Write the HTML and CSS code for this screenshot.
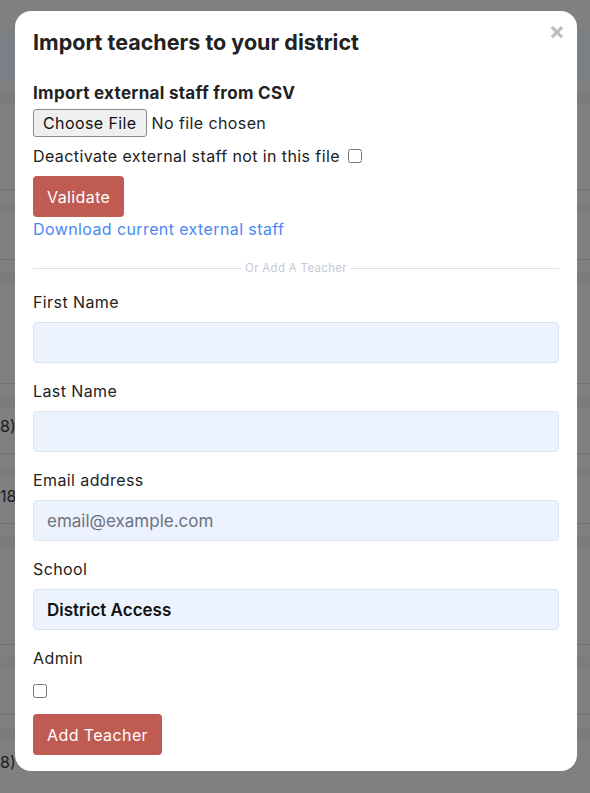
FILE: index.html
```html
<!DOCTYPE html>
<html>
<head>
<meta charset="utf-8">
<link rel="stylesheet" href="styles.css">
</head>
<body>
<div class="page">
  <div class="band"></div>
  <div class="row r1"></div>
  <div class="row r2"></div>
  <div class="row r3"></div>
  <div class="row r4"><span class="cell">8)</span></div>
  <div class="row r5"><span class="cell">18</span></div>
  <div class="row r6"></div>
  <div class="row r7"></div>
  <div class="row r8"><span class="cell">8)</span></div>
</div>
<div class="overlay">
  <div class="modal">
    <span class="close">&times;</span>
    <h2 class="title">Import teachers to your district</h2>
    <div class="csv">
      <div class="csv-head">Import external staff from CSV</div>
      <input class="file" type="file">
      <label class="deact">Deactivate external staff not in this file <input class="check" type="checkbox"></label>
      <button class="btn">Validate</button>
      <a class="link" href="#">Download current external staff</a>
    </div>
    <div class="divider"><span>Or Add A Teacher</span></div>
    <div class="field">
      <label class="lbl">First Name</label>
      <input class="inp" type="text">
    </div>
    <div class="field">
      <label class="lbl">Last Name</label>
      <input class="inp" type="text">
    </div>
    <div class="field">
      <label class="lbl">Email address</label>
      <input class="inp" type="email" placeholder="email@example.com">
    </div>
    <div class="field">
      <label class="lbl">School</label>
      <div class="inp select">District Access</div>
    </div>
    <div class="field admin">
      <label class="lbl">Admin</label>
      <input class="check" type="checkbox">
    </div>
    <button class="btn">Add Teacher</button>
  </div>
</div>
</body>
</html>
```

FILE: styles.css
```css
html, body {
  margin: 0;
  padding: 0;
  width: 590px;
  height: 793px;
  overflow: hidden;
  background: #808080;
  font-family: Inter, "Liberation Sans", sans-serif;
}
.page {
  display: flex;
  flex-direction: column;
  padding-top: 33px;
}
.band {
  height: 47px;
  background: #7b7f86;
}
.row {
  border-bottom: 1px solid #727272;
  box-sizing: border-box;
  display: flex;
  align-items: center;
  background: linear-gradient(#808080 0, #808080 12px, #7c7c7c 12px, #7c7c7c 24px, #808080 24px);
}
.r1 { height: 110px; }
.r2 { height: 70px; }
.r3 { height: 124px; }
.r4 { height: 70px; }
.r5 { height: 70px; }
.r6 { height: 121px; }
.r7 { height: 70px; }
.r8 { height: 80px; border-bottom: none; }
.cell {
  font-size: 16px;
  color: #1c1c1c;
  padding-left: 0;
  padding-top: 14px;
}
.overlay {
  position: absolute;
  left: 0;
  top: 0;
  width: 590px;
  height: 793px;
}
.modal {
  position: absolute;
  left: 15px;
  top: 11px;
  width: 562px;
  height: 760px;
  box-sizing: border-box;
  background: #fff;
  border-radius: 16px;
  padding: 18px 18px 0 18px;
  color: #212121;
}
.close {
  position: absolute;
  right: 12px;
  top: 8px;
  font-size: 24px;
  font-weight: 700;
  color: #bdbdbd;
  line-height: 1;
}
.title {
  margin: 0;
  font-size: 21.5px;
  font-weight: 700;
  line-height: 26px;
  color: #222;
}
.csv {
  display: flex;
  flex-direction: column;
  align-items: flex-start;
  margin-top: 27px;
  letter-spacing: 0.4px;
}
.csv-head {
  font-size: 17px;
  font-weight: 700;
  line-height: 22px;
  color: #222;
  letter-spacing: 0.3px;
}
.file {
  font-family: inherit;
  font-size: 16px;
  letter-spacing: 0.4px;
  color: #222;
  margin-top: 5px;
  height: 28px;
}
.file::file-selector-button {
  font-family: inherit;
  font-size: 16px;
  letter-spacing: 0.4px;
  color: #111;
  background: #efefef;
  border: 1px solid #8a8a8a;
  border-radius: 3px;
  padding: 2px 9px;
  margin-right: 5px;
  height: 28px;
}
.deact {
  font-size: 16px;
  line-height: 22px;
  margin-top: 8px;
  display: flex;
  align-items: center;
  gap: 8px;
}
.check {
  width: 14px;
  height: 14px;
  margin: 0;
  accent-color: #444;
}
.btn {
  font-family: inherit;
  font-size: 16px;
  letter-spacing: 0.4px;
  color: #fff;
  background: #bf5b50;
  border: none;
  border-radius: 4px;
  height: 41px;
  padding: 0 14px;
  margin-top: 9px;
}
.link {
  font-size: 16px;
  line-height: 22px;
  color: #4a88f5;
  text-decoration: none;
  margin-top: 1px;
}
.divider {
  display: flex;
  align-items: center;
  gap: 4px;
  margin-top: 21px;
  font-size: 11.5px;
  letter-spacing: 0.3px;
  color: #c6cad5;
  height: 14px;
}
.divider::before, .divider::after {
  content: "";
  flex: 1;
  height: 1px;
  background: #dcdfe6;
}
.field {
  display: flex;
  flex-direction: column;
  margin-top: 15px;
}
.field + .field { margin-top: 16px; }
.lbl {
  font-size: 16px;
  line-height: 24px;
  letter-spacing: 0.4px;
  margin-bottom: 8px;
  color: #222;
}
.inp {
  box-sizing: border-box;
  height: 41px;
  width: 100%;
  background: #edf3fe;
  border: 1px solid #dce3ef;
  border-radius: 4px;
  font-family: inherit;
  font-size: 17px;
  padding: 0 13px;
  color: #111;
  outline: none;
}
.inp::placeholder { color: #6b7280; }
.select {
  display: flex;
  align-items: center;
  font-weight: 600;
  color: #111;
}
.admin .lbl { margin-bottom: 14px; }
.admin { align-items: flex-start; }
.admin + .btn { margin-top: 16px; }
```
